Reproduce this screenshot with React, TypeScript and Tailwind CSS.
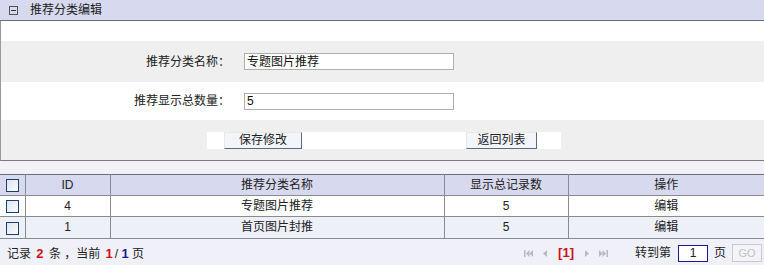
import React from "react";

const font = { fontFamily: '"Liberation Sans", "Noto Sans CJK SC", sans-serif' };

function Check() {
  return (
    <span className="inline-block w-[13px] h-[13px] border border-[#1c3f6e] bg-gradient-to-br from-[#dce4ee] to-[#fdfdfd] align-middle" />
  );
}

function PagerIcon({ kind }: { kind: "first" | "prev" | "next" | "last" }) {
  const fill = "#b8b8c4";
  return (
    <svg width="10" height="9" viewBox="0 0 10 9" className="inline-block">
      {kind === "first" && (
        <g fill={fill}>
          <rect x="0" y="1" width="1.5" height="7" />
          <path d="M5.5 1 L2 4.5 L5.5 8 Z" />
          <path d="M9 1 L5.5 4.5 L9 8 Z" />
        </g>
      )}
      {kind === "prev" && <path d="M7 1 L3 4.5 L7 8 Z" fill={fill} />}
      {kind === "next" && <path d="M3 1 L7 4.5 L3 8 Z" fill={fill} />}
      {kind === "last" && (
        <g fill={fill}>
          <path d="M1 1 L4.5 4.5 L1 8 Z" />
          <path d="M4.5 1 L8 4.5 L4.5 8 Z" />
          <rect x="8.5" y="1" width="1.5" height="7" />
        </g>
      )}
    </svg>
  );
}

const rows = [
  { id: 4, name: "专题图片推荐", count: 5 },
  { id: 1, name: "首页图片封推", count: 5 },
];

export default function App() {
  return (
    <div className="w-[764px] h-[265px] bg-white text-[12px] text-[#222] overflow-hidden" style={font}>
      {/* Header */}
      <div className="h-[21px] bg-[#d7d9ee] border-b border-[#6e6e78] flex items-center pl-[9px]">
        <span className="w-[9px] h-[9px] border border-[#555] flex items-center justify-center">
          <span className="w-[5px] h-px bg-[#333]" />
        </span>
        <span className="ml-[12px] leading-none">推荐分类编辑</span>
      </div>

      {/* Form */}
      <div className="border-l border-[#9a9a9a] border-b border-b-[#7a7a80]">
        <div className="h-[20px] bg-white" />
        <div className="h-[41px] bg-[#efefef] flex items-center">
          <span className="w-[229px] text-right">推荐分类名称：</span>
          <input
            readOnly
            value="专题图片推荐"
            className="ml-[14px] w-[210px] h-[17px] border border-[#aeaeae] bg-white px-[2px] text-[12px] text-[#111] outline-none"
            style={font}
          />
        </div>
        <div className="h-[38px] bg-white flex items-center">
          <span className="w-[229px] text-right">推荐显示总数量：</span>
          <input
            readOnly
            value="5"
            className="ml-[14px] w-[210px] h-[17px] border border-[#aeaeae] bg-white px-[2px] text-[12px] text-[#111] outline-none"
            style={font}
          />
        </div>
        <div className="h-[40px] bg-[#efefef] flex items-center">
          <div className="ml-[206px] w-[354px] h-[17px] bg-white flex items-center justify-between pl-[17px] pr-[24px]">
            <button className="w-[78px] h-[17px] bg-[#f2f6fb] border border-[#e8e8e8] border-r-[#5a6a80] border-b-[#5a6a80] text-[12px] leading-none" style={font}>
              保存修改
            </button>
            <button className="w-[71px] h-[17px] bg-[#f2f6fb] border border-[#e8e8e8] border-r-[#5a6a80] border-b-[#5a6a80] text-[12px] leading-none" style={font}>
              返回列表
            </button>
          </div>
        </div>
      </div>

      {/* Spacer */}
      <div className="h-[13px] bg-[#f1f1f7]" />

      {/* Table */}
      <table className="w-full border-collapse border-t border-t-[#6e6e78]">
        <thead>
          <tr className="h-[21px] bg-[#d7d9ee]">
            <th className="w-[25px] font-normal border-r border-[#8a8a94] text-center"><Check /></th>
            <th className="w-[85px] font-normal border-r border-[#8a8a94]">ID</th>
            <th className="w-[334px] font-normal border-r border-[#8a8a94]">推荐分类名称</th>
            <th className="w-[124px] font-normal border-r border-[#8a8a94]">显示总记录数</th>
            <th className="font-normal">操作</th>
          </tr>
        </thead>
        <tbody>
          {rows.map((r, i) => (
            <tr key={r.id} className={`h-[21px] border-t border-[#8a8a94] ${i === 1 ? "bg-[#eef0f8]" : "bg-white"}`}>
              <td className="text-center border-r border-[#8a8a94]"><Check /></td>
              <td className="text-center border-r border-[#8a8a94]">{r.id}</td>
              <td className="text-center border-r border-[#8a8a94]">{r.name}</td>
              <td className="text-center border-r border-[#8a8a94]">{r.count}</td>
              <td className="text-center">编辑</td>
            </tr>
          ))}
        </tbody>
      </table>

      {/* Footer */}
      <div className="h-[27px] border-t border-[#8a8a94] bg-[#f0f1f8] flex items-center justify-between pl-[7px] pr-[2px]">
        <div className="pt-[4px]">
          记录 <b className="text-[#cc1111] text-[13px] mx-[2px]">2</b> 条 ，当前 <b className="text-[#cc1111] text-[13px] mx-[2px]">1</b>/ <b className="text-[#1a1a99] text-[13px]">1</b> 页
        </div>
        <div className="flex items-center pt-[3px]">
          <PagerIcon kind="first" />
          <span className="ml-[6px]"><PagerIcon kind="prev" /></span>
          <b className="ml-[8px] text-[#cc1111] text-[13px]">[1]</b>
          <span className="ml-[8px]"><PagerIcon kind="next" /></span>
          <span className="ml-[6px]"><PagerIcon kind="last" /></span>
          <span className="ml-[27px]">转到第</span>
          <input
            readOnly
            value="1"
            className="ml-[7px] w-[30px] h-[17px] border border-[#1a1a99] bg-white text-center text-[12px] outline-none"
            style={font}
          />
          <span className="ml-[6px]">页</span>
          <button className="ml-[6px] w-[30px] h-[18px] border border-[#c8c8d0] bg-[#f4f4f8] text-[#c0c0c8] text-[11px]" style={font}>
            GO
          </button>
        </div>
      </div>
    </div>
  );
}
